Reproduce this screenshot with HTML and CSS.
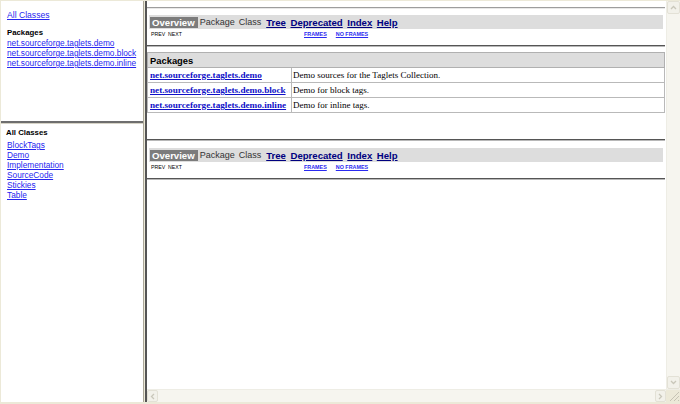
FILE: index.html
```
<!DOCTYPE html>
<html>
<head>
<meta charset="utf-8">
<title>Overview</title>
<link rel="stylesheet" href="styles.css">
</head>
<body>
<div class="window">
  <div class="left">
    <div class="frame top-frame">
      <a class="all-link" href="#">All Classes</a>
      <div class="pk-title">Packages</div>
      <a class="pk-link" href="#">net.sourceforge.taglets.demo</a>
      <a class="pk-link" href="#">net.sourceforge.taglets.demo.block</a>
      <a class="pk-link" href="#">net.sourceforge.taglets.demo.inline</a>
    </div>
    <div class="hdivider"></div>
    <div class="frame bottom-frame">
      <div class="cl-title">All Classes</div>
      <a class="cl-link" href="#">BlockTags</a>
      <a class="cl-link" href="#">Demo</a>
      <a class="cl-link" href="#">Implementation</a>
      <a class="cl-link" href="#">SourceCode</a>
      <a class="cl-link" href="#">Stickies</a>
      <a class="cl-link" href="#">Table</a>
    </div>
  </div>
  <div class="vdivider"></div>
  <div class="right">
    <div class="right-main">
      <div class="page">
        <div class="hr hr-light"></div>
        <div class="navbar">
          <span class="nav-cur">Overview</span>
          <span class="nav-plain">Package</span>
          <span class="nav-plain">Class</span>
          <a class="nav-link" href="#">Tree</a>
          <a class="nav-link" href="#">Deprecated</a>
          <a class="nav-link" href="#">Index</a>
          <a class="nav-link" href="#">Help</a>
        </div>
        <div class="subnav">
          <span class="sub-left">PREV&nbsp;&nbsp;NEXT</span>
          <span class="sub-right"><a href="#">FRAMES</a><a href="#">NO FRAMES</a></span>
        </div>
        <div class="hr hr-dark"></div>

        <table class="pkgs">
          <tr><th colspan="2">Packages</th></tr>
          <tr><td class="c1"><a href="#">net.sourceforge.taglets.demo</a></td><td>Demo sources for the Taglets Collection.</td></tr>
          <tr><td class="c1"><a href="#">net.sourceforge.taglets.demo.block</a></td><td>Demo for block tags.</td></tr>
          <tr><td class="c1"><a href="#">net.sourceforge.taglets.demo.inline</a></td><td>Demo for inline tags.</td></tr>
        </table>

        <div class="hr hr-dark hr-gap"></div>
        <div class="navbar navbar-bottom">
          <span class="nav-cur">Overview</span>
          <span class="nav-plain">Package</span>
          <span class="nav-plain">Class</span>
          <a class="nav-link" href="#">Tree</a>
          <a class="nav-link" href="#">Deprecated</a>
          <a class="nav-link" href="#">Index</a>
          <a class="nav-link" href="#">Help</a>
        </div>
        <div class="subnav">
          <span class="sub-left">PREV&nbsp;&nbsp;NEXT</span>
          <span class="sub-right"><a href="#">FRAMES</a><a href="#">NO FRAMES</a></span>
        </div>
        <div class="hr hr-dark"></div>
      </div>
      <div class="vscroll">
        <div class="sb-btn"><svg width="7" height="5" viewBox="0 0 7 5"><path d="M1 4 L3.5 1.5 L6 4" fill="none" stroke="#c9c7ba" stroke-width="1.3"/></svg></div>
        <div class="sb-track"></div>
        <div class="sb-btn"><svg width="7" height="5" viewBox="0 0 7 5"><path d="M1 1 L3.5 3.5 L6 1" fill="none" stroke="#c9c7ba" stroke-width="1.3"/></svg></div>
      </div>
    </div>
    <div class="hscroll">
      <div class="sb-btn"><svg width="5" height="7" viewBox="0 0 5 7"><path d="M4 1 L1.5 3.5 L4 6" fill="none" stroke="#c9c7ba" stroke-width="1.3"/></svg></div>
      <div class="sb-track"></div>
      <div class="sb-btn"><svg width="5" height="7" viewBox="0 0 5 7"><path d="M1 1 L3.5 3.5 L1 6" fill="none" stroke="#c9c7ba" stroke-width="1.3"/></svg></div>
      <div class="sb-corner"><svg width="12" height="12" viewBox="0 0 12 12"><path d="M11 2 L2 11 M11 6 L6 11 M11 10 L10 11" stroke="#c6c3b4" stroke-width="1"/></svg></div>
    </div>
  </div>
</div>
</body>
</html>
```

FILE: styles.css
```
html, body {
  margin: 0;
  padding: 0;
}
body {
  background: #ece9d8;
  font-family: "Liberation Sans", Arial, sans-serif;
}
.window {
  width: 680px;
  height: 404px;
  display: flex;
  box-sizing: border-box;
  padding: 1px 0 2px 1px;
  background: #ece9d8;
}
.left {
  width: 142px;
  flex: none;
  display: flex;
  flex-direction: column;
}
.frame {
  background: #fff;
  display: flex;
  flex-direction: column;
  align-items: flex-start;
}
.top-frame {
  height: 120px;
  padding: 9px 0 0 6px;
  box-sizing: border-box;
}
.hdivider {
  height: 2px;
  background: #6e6e6e;
  border-bottom: 1px solid #d6d3c6;
}
.bottom-frame {
  flex: 1;
  padding: 4px 0 0 5px;
}
a {
  color: #2626f0;
}
.all-link {
  font-size: 8.6px;
  line-height: 11px;
}
.pk-title {
  font-size: 7.8px;
  font-weight: bold;
  line-height: 10px;
  margin-top: 7px;
}
.pk-link {
  font-size: 8.3px;
  line-height: 10px;
}
.cl-title {
  font-size: 7.8px;
  font-weight: bold;
  line-height: 10px;
  margin-bottom: 2px;
}
.cl-link {
  font-size: 8.3px;
  line-height: 10px;
  margin-left: 1px;
}
.vdivider {
  width: 4px;
  flex: none;
  background: #ece9d8;
  border-right: 2px solid #555;
  border-left: 1px solid #aca899;
  box-sizing: border-box;
}
.right {
  flex: 1;
  min-width: 0;
  display: flex;
  flex-direction: column;
  background: #fff;
}
.right-main {
  flex: 1;
  display: flex;
  min-height: 0;
}
.page {
  flex: 1;
  min-width: 0;
  padding: 6px 0 0 0;
  overflow: hidden;
}
.hr {
  width: 518px;
}
.hr-light {
  height: 1px;
  background: #9d9d9d;
  border-bottom: 1px solid #e8e8e8;
}
.hr-dark {
  height: 1px;
  background: #555;
  border-bottom: 1px solid #b8b8b8;
}
.hr-gap {
  margin-top: 26px;
}
.navbar {
  margin: 6px 0 0 2px;
  width: 514px;
  height: 14px;
  background: #dddddd;
  display: flex;
  align-items: center;
  font-size: 9.6px;
  white-space: nowrap;
}
.navbar-bottom {
  margin-top: 7px;
}
.nav-cur {
  background: #7c7c7c;
  color: #fff;
  font-weight: bold;
  padding: 0 3px 0 2px;
  margin-left: 1px;
  line-height: 11px;
}
.nav-plain {
  color: #333;
  margin-left: 2px;
  margin-right: 2px;
  font-size: 9px;
}
.nav-plain + .nav-plain {
  margin-left: 2px;
}
.nav-link {
  color: #000080;
  font-weight: bold;
  margin-left: 4.5px;
}
.nav-plain + .nav-link {
  margin-left: 3px;
}
.subnav {
  display: flex;
  height: 10px;
  margin: 0 0 6px 2px;
  align-items: center;
  font-size: 5.2px;
  white-space: nowrap;
}
.sub-left {
  width: 155px;
  padding-left: 2px;
  box-sizing: border-box;
  color: #000;
}
.sub-right a {
  font-weight: bold;
  color: #2a2af0;
  margin-right: 9px;
  font-size: 5.4px;
}
table.pkgs {
  margin-top: 5px;
  width: 518px;
  border-collapse: collapse;
  border: 1px solid #808080;
  font-family: "Liberation Serif", "Times New Roman", serif;
  font-size: 9px;
}
.pkgs th {
  background: #dddddd;
  text-align: left;
  font-family: "Liberation Sans", Arial, sans-serif;
  font-size: 9.4px;
  font-weight: bold;
  height: 15px;
  padding: 0 2px;
  border: 1px solid #b0b0b0;
  box-sizing: border-box;
}
.pkgs td {
  height: 15px;
  padding: 0 1px;
  border: 1px solid #b9b9b9;
  box-sizing: border-box;
  white-space: nowrap;
}
.pkgs td.c1 {
  width: 144px;
  padding-left: 2px;
}
.pkgs td.c1 a {
  font-weight: bold;
  color: #1010c8;
  font-size: 9.2px;
}
.vscroll {
  width: 13px;
  flex: none;
  display: flex;
  flex-direction: column;
  background: #f6f5ef;
  border-left: 1px solid #eeede5;
}
.sb-btn {
  height: 13px;
  width: 13px;
  flex: none;
  display: flex;
  align-items: center;
  justify-content: center;
  background: #f2f1ea;
  border: 1px solid #e3e1d6;
  box-sizing: border-box;
  border-radius: 2px;
}
.sb-track {
  flex: 1;
  background: #f6f5ef;
}
.hscroll {
  height: 12px;
  flex: none;
  display: flex;
  background: #f6f5ef;
  border-top: 1px solid #eeede5;
}
.hscroll .sb-btn {
  height: 12px;
  width: 11px;
}
.sb-corner {
  width: 14px;
  height: 12px;
  flex: none;
  background: #ece9d8;
  display: flex;
  align-items: flex-end;
  justify-content: flex-end;
}
```
